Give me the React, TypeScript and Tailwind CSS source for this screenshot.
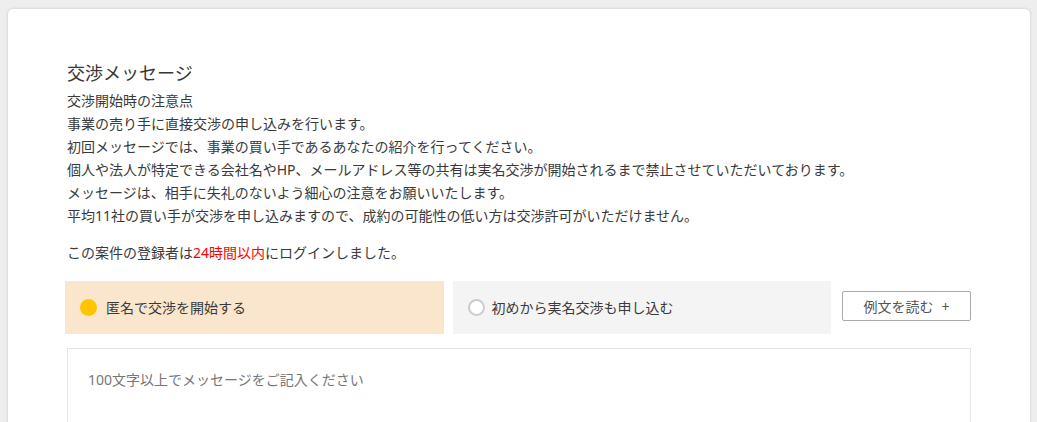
import React from "react";

export default function App() {
  const lines = [
    "事業の売り手に直接交渉の申し込みを行います。",
    "初回メッセージでは、事業の買い手であるあなたの紹介を行ってください。",
    "個人や法人が特定できる会社名やHP、メールアドレス等の共有は実名交渉が開始されるまで禁止させていただいております。",
    "メッセージは、相手に失礼のないよう細心の注意をお願いいたします。",
    "平均11社の買い手が交渉を申し込みますので、成約の可能性の低い方は交渉許可がいただけません。",
  ];
  return (
    <div
      className="min-h-[422px] bg-[#eeeeee] pl-2 pr-[7px] pt-[9px]"
      style={{ fontFamily: '"Noto Sans", "Noto Sans CJK JP", sans-serif' }}
    >
      <div className="min-h-[420px] rounded-[5px] bg-white px-[59px] pt-[50px] shadow-[0_0_3px_rgba(0,0,0,0.18)]">
        <h2 className="text-[18px] leading-[28px] text-[#383838]">交渉メッセージ</h2>
        <div className="mt-[2px] text-[14px] leading-[23px] text-[#3a3a3a]">
          <p>交渉開始時の注意点</p>
          {lines.map((l) => (
            <p key={l}>{l}</p>
          ))}
        </div>
        <p className="mt-[14px] text-[14px] leading-[23px] text-[#3a3a3a]">
          この案件の登録者は<span className="text-[#ff0000]">24時間以内</span>にログインしました。
        </p>
        <div className="-ml-[2px] mt-[17px] flex items-start">
          <div className="flex h-[53px] flex-1 items-center gap-[9px] bg-[#fae6cc] pl-[15px] text-[14px] text-[#3a3a3a]">
            <span className="h-[17px] w-[17px] rounded-full bg-[#ffc600]" />
            <span>匿名で交渉を開始する</span>
          </div>
          <div className="ml-[9px] flex h-[53px] flex-1 items-center gap-[7px] bg-[#f4f4f4] pl-[15px] text-[14px] text-[#3a3a3a]">
            <span className="h-[17px] w-[17px] rounded-full border-2 border-[#cccccc] bg-white" />
            <span>初めから実名交渉も申し込む</span>
          </div>
          <button className="ml-[11px] mt-[10px] flex h-[30px] w-[129px] items-center justify-center rounded-[2px] border border-[#aaaaaa] bg-white text-[14px] text-[#555]">
            例文を読む<span className="ml-[8px]">+</span>
          </button>
        </div>
        <div className="mt-[14px] h-[120px] border border-[#e5e5e5] px-[20px] pt-[19px] text-[14px] leading-[23px] text-[#777]">
          100文字以上でメッセージをご記入ください
        </div>
      </div>
    </div>
  );
}
